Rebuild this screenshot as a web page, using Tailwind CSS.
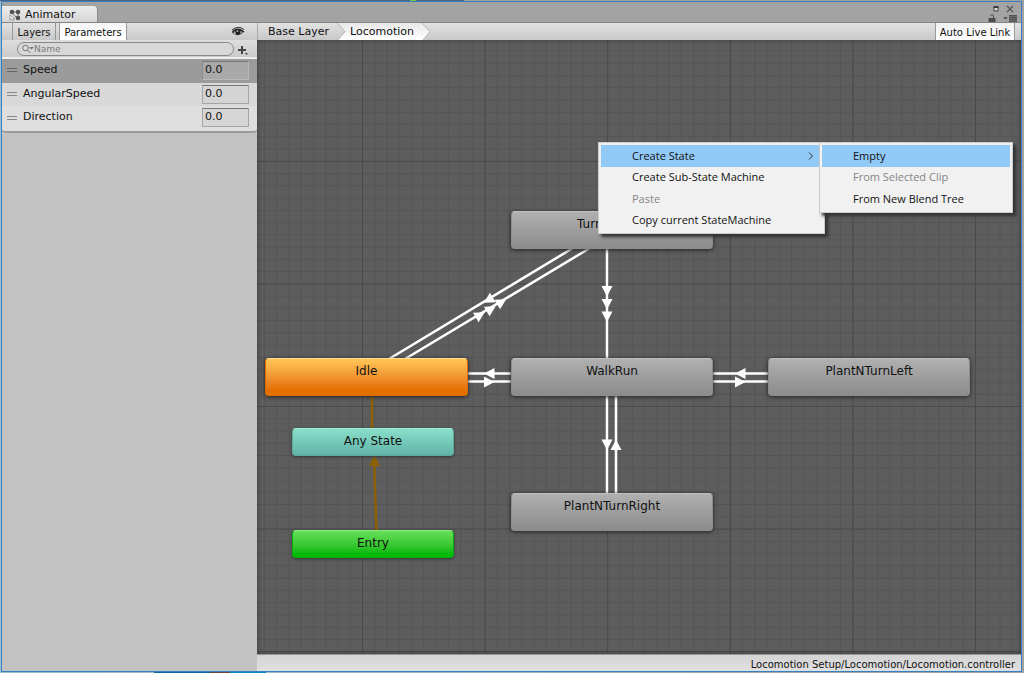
<!DOCTYPE html>
<html lang="en">
<head>
<meta charset="utf-8">
<title>Animator</title>
<script src="https://cdn.jsdelivr.net/npm/@tailwindcss/browser@4"></script>
</head>
<body class="flex h-screen flex-col overflow-hidden bg-linear-to-r from-[#9cc0d0] to-[#a2a2a2] font-['DejaVu_Sans',sans-serif] text-[11px] text-[#111]">
<div class="flex h-px shrink-0 bg-[#a0a0a0]"><div class="w-[40%] bg-[#4c6383]"></div><div class="w-1.5 bg-[#77cc33]"></div><div class="w-12 bg-[#4c6383]"></div></div>
<div class="mr-0.5 ml-px flex min-h-0 flex-1 flex-col border border-[#3380c4] bg-[#a3a3a3]">

  <header class="flex h-[21px] shrink-0 items-end justify-between border-b border-[#858585]">
    <h1 class="flex h-4 w-24 items-center gap-1 rounded-tr-sm border-r border-[#8a8a8a] bg-linear-to-b from-[#ececec] to-[#d6d6d6] pt-0.5 pl-[7px]">
      <svg class="size-3" viewBox="0 0 12 12" fill="#505050" aria-hidden="true">
        <path d="M5 3h3M9 4v4M4 5l4 4" stroke="#777" fill="none"/>
        <circle cx="3" cy="3" r="2.300"/><circle cx="9" cy="3" r="2.300"/><circle cx="9" cy="9" r="2.300"/>
        <path d="M1 6v5.500l1.600-1.400 1.200 1.700 1.200-.8-1-1.600h1.700z" fill="#eee" stroke="#777" stroke-width=".6"/>
      </svg>
      <span>Animator</span>
    </h1>
    <div class="mr-1 grid h-5 w-7 grid-cols-2 items-center justify-items-center pt-0.5">
      <button aria-label="Maximize" class="h-2"><svg class="size-2" viewBox="0 0 8 8"><path d="M2 2h4v4H2z" fill="#ddd" stroke="#3c3c3c" stroke-width="1"/><path d="M1.500 2h5" stroke="#3c3c3c" stroke-width="2"/></svg></button>
      <button aria-label="Close" class="h-2"><svg class="size-2" viewBox="0 0 8 8"><path d="M1 .8l6 6.400M7 .8L1 7.200" stroke="#4d4d4d" stroke-width="1.200"/></svg></button>
      <button aria-label="Lock" class="-ml-2 h-2"><svg class="h-2 w-2" viewBox="0 0 8 8"><path d="M.5 4h7v4h-7z" fill="#4d4d4d"/><path d="M2.500 2V1.500Q4 0 5.500 1.200V4" fill="none" stroke="#4d4d4d"/></svg></button>
      <button aria-label="Window menu" class="h-2"><svg class="h-2 w-3.5" viewBox="0 0 14 8"><path d="M0 3h5L2.500 5.500zM6 1h8v7H6z" fill="#555"/><path d="M6 2.500h8M6 4.500h8M6 6.500h8" stroke="#777" stroke-width=".6"/></svg></button>
    </div>
  </header>

  <div class="flex min-h-0 flex-1">
    <aside class="flex w-[255px] shrink-0 flex-col bg-[#c2c2c2]">
      <div class="flex h-[17px] items-stretch bg-linear-to-b from-[#e2e2e2] to-[#c8c8c8] pl-2.5 text-[10px] leading-4">
        <button class="w-11 border-x border-[#999] pt-0.5">Layers</button>
        <button class="ml-[3px] w-[68px] border-x border-[#999] bg-linear-to-b from-[#f6f6f6] to-white pt-0.5">Parameters</button>
        <button aria-label="Toggle panel" class="mr-3 ml-auto"><svg class="h-3 w-3.5" viewBox="0 0 14 12"><path d="M.5 6Q6.500-.5 13.500 5.500Q7 12.500.5 6z" fill="#222"/><path d="M1 4Q7-1 13 3.500" fill="none" stroke="#333"/><path d="M2.500 6.500Q3.500 5 4.300 5Q4 7 5.200 8.300Q3.500 8 2.500 6.500zM9.500 5Q11 5.500 11.500 6.300Q10.500 7.500 9 8Q10 7 9.500 5z" fill="#ccc"/><circle cx="6.500" cy="5" r="1" fill="#aaa"/></svg></button>
      </div>
      <div class="flex h-[17px] items-center gap-[3px] bg-linear-to-b from-[#dedede] to-[#cacaca] pl-[15px]">
        <label class="flex h-3.5 w-[217px] items-center rounded-full border border-[#898989] bg-[#d8d8d8] pl-1">
          <svg class="h-2.5 w-3" viewBox="0 0 12 10" fill="none" stroke="#777" aria-hidden="true"><circle cx="3.500" cy="4" r="2.800"/><path d="M5.500 6l3 3"/><path d="M7 3h5L9.500 5.500z" fill="#777" stroke="none"/></svg>
          <input aria-label="Search parameters" placeholder="Name" class="min-w-0 flex-1 bg-transparent text-[9px] leading-3 outline-none placeholder:text-[#7c7c7c]">
        </label>
        <button aria-label="Add parameter"><svg class="size-3" viewBox="0 0 12 12"><path d="M1 7h8M5 3v8" stroke="#444" stroke-width="2"/><path d="M8 10h3l-1.500 2z" fill="#444"/></svg></button>
      </div>
      <ul class="overflow-hidden rounded-b border-t-2 border-b-2 border-t-[#eee] border-b-[#9b9b9b] bg-[#dedede]">
        <li class="flex h-6 items-center bg-[#9b9b9b] pr-2 pb-0.5 pl-[5px]">
          <svg class="mr-1.5 h-1 w-2.5" viewBox="0 0 10 4" aria-hidden="true"><path d="M0 .5h10M0 3.500h10" stroke="#666"/></svg>
          <label for="speed" class="flex-1">Speed</label>
          <input id="speed" value="0.0" class="h-[19px] w-[47px] border border-[#b8b8b8] border-t-[#777] border-l-[#8a8a8a] bg-[#a9a9a9] px-0.5 pb-0.5 outline-none">
        </li>
        <li class="flex h-[23px] items-center bg-[#d8d8d8] pr-2 pb-px pl-[5px]">
          <svg class="mr-1.5 h-1 w-2.5" viewBox="0 0 10 4" aria-hidden="true"><path d="M0 .5h10M0 3.500h10" stroke="#888"/></svg>
          <label for="angular" class="flex-1">AngularSpeed</label>
          <input id="angular" value="0.0" class="h-[19px] w-[47px] border border-[#a5a5a5] border-t-[#777] bg-[#d4d4d4] px-0.5 pb-0.5 outline-none">
        </li>
        <li class="flex h-[25px] items-center pr-2 pb-0.5 pl-[5px]">
          <svg class="mr-1.5 h-1 w-2.5" viewBox="0 0 10 4" aria-hidden="true"><path d="M0 .5h10M0 3.500h10" stroke="#888"/></svg>
          <label for="direction" class="flex-1">Direction</label>
          <input id="direction" value="0.0" class="h-[19px] w-[47px] border border-[#a5a5a5] border-t-[#777] bg-[#d6d6d6] px-0.5 pb-0.5 outline-none">
        </li>
      </ul>
    </aside>

    <main class="flex min-w-0 flex-1 flex-col">
      <div class="flex h-[17px] shrink-0 bg-linear-to-b from-[#e2e2e2] to-[#c8c8c8] leading-4">
        <nav aria-label="Breadcrumb" class="relative flex border-l border-[#aaa] pt-px">
          <svg class="absolute inset-0 h-full w-[172px]" viewBox="0 0 172 17" aria-hidden="true">
            <defs><linearGradient id="crumb" x2="0" y2="1"><stop stop-color="#e8e8e8"/><stop offset="1" stop-color="#fff"/></linearGradient></defs>
            <path d="M80 0h84l8 8.500-7 8.500H80l7-8.500z" fill="url(#crumb)"/>
            <path d="M79 0l8 8.500-7 8.500M164 0l8 8.500-7 8.500" fill="none" stroke="#b5b5b5"/>
          </svg>
          <a href="#base" class="relative w-[83px] pl-2.5">Base Layer</a>
          <a href="#locomotion" class="relative w-[89px] pl-[9px]">Locomotion</a>
        </nav>
        <button class="mr-1.5 ml-auto w-20 border-x border-[#999] bg-linear-to-b from-[#f0f0f0] to-white pt-0.5 text-[10px]">Auto Live Link</button>
      </div>

      <section aria-label="State machine" class="relative min-h-0 flex-1 overflow-hidden bg-[#5d5d5d]">
        <svg class="absolute inset-0 size-full" aria-hidden="true">
          <defs>
            <pattern id="minor" width="10" height="10" patternUnits="userSpaceOnUse" patternTransform="translate(105 366) scale(1.226)"><path d="M.4 0v10M0 .4h10" stroke="#555" stroke-width=".9"/></pattern>
            <pattern id="major" width="100" height="100" patternUnits="userSpaceOnUse" patternTransform="translate(105 366) scale(1.226)"><path d="M.4 0v100M0 .4h100" stroke="#494949" stroke-width=".8"/></pattern>
            <path id="tip" d="M-5-5.500L5.500 0L-5 5.500z"/>
          </defs>
          <rect width="100%" height="100%" fill="url(#minor)"/>
          <rect width="100%" height="100%" fill="url(#major)"/>
          <g stroke="#fff" stroke-width="2.500">
            <path d="M132 319L316 208M148 319L333 208M350 208V320M350 354V456M359 354V456M210 333.500H256M210 341.500H256M454 333.500H512M454 341.500H512"/>
          </g>
          <path d="M115 355V390M119.500 492L117 418" stroke="#8f6000" stroke-width="2.500"/>
          <g fill="#fff">
            <use href="#tip" transform="translate(231.500 260) rotate(149)"/>
            <use href="#tip" transform="translate(223 275) rotate(-31)"/>
            <use href="#tip" transform="translate(234 269) rotate(-31)"/>
            <use href="#tip" transform="translate(244.500 262) rotate(-31)"/>
            <use href="#tip" transform="translate(350 251) rotate(90)"/>
            <use href="#tip" transform="translate(350 264) rotate(90)"/>
            <use href="#tip" transform="translate(350 276.500) rotate(90)"/>
            <use href="#tip" transform="translate(350 404.500) rotate(90)"/>
            <use href="#tip" transform="translate(359 405) rotate(-90)"/>
            <use href="#tip" transform="translate(232.500 333.500) rotate(180)"/>
            <use href="#tip" transform="translate(232 342)"/>
            <use href="#tip" transform="translate(483.500 333.500) rotate(180)"/>
            <use href="#tip" transform="translate(483 342)"/>
          </g>
          <use href="#tip" transform="translate(117.500 421) rotate(-90)" fill="#8f6000"/>
        </svg>

        <div class="absolute top-[171px] left-[254px] h-[38px] w-[202px] rounded border border-[#8c8c8c] border-t-[#c0c0c0] bg-linear-to-b from-[#b0b0b0] to-[#8c8c8c] pt-1 text-center text-xs shadow-[0_1px_4px_#222]">TurnOnSpot</div>
        <div class="absolute top-[318px] left-2 h-[38px] w-[203px] rounded border border-[#d96b00] border-t-[#ffdc90] bg-linear-to-b from-[#ffc658] to-[#e47000] to-85% pt-1 text-center text-xs shadow-[0_1px_4px_#222]">Idle</div>
        <div class="absolute top-[318px] left-[254px] h-[38px] w-[202px] rounded border border-[#8c8c8c] border-t-[#c0c0c0] bg-linear-to-b from-[#b0b0b0] to-[#8c8c8c] pt-1 text-center text-xs shadow-[0_1px_4px_#222]">WalkRun</div>
        <div class="absolute top-[318px] left-[511px] h-[38px] w-[202px] rounded border border-[#8c8c8c] border-t-[#c0c0c0] bg-linear-to-b from-[#b0b0b0] to-[#8c8c8c] pt-1 text-center text-xs shadow-[0_1px_4px_#222]">PlantNTurnLeft</div>
        <div class="absolute top-[453px] left-[254px] h-[38px] w-[202px] rounded border border-[#8c8c8c] border-t-[#c0c0c0] bg-linear-to-b from-[#b0b0b0] to-[#8c8c8c] pt-1 text-center text-xs shadow-[0_1px_4px_#222]">PlantNTurnRight</div>
        <div class="absolute top-[388px] left-[35px] h-7 w-[162px] rounded border border-[#5eaa9d] border-t-[#a0e8d8] bg-linear-to-b from-[#8adfcb] to-[#60b3a6] pt-1 text-center text-xs shadow-[0_1px_3px_#333]">Any State</div>
        <div class="absolute top-[490px] left-[35px] h-7 w-[162px] rounded border border-[#05ac0b] border-t-[#8cec80] bg-linear-to-b from-[#64df58] to-[#04bb0a] to-85% pt-1 text-center text-xs shadow-[0_1px_3px_#333]">Entry</div>
        <div class="pointer-events-none absolute inset-0 shadow-[inset_0_0_5px_#3a3a3a]"></div>

        <div role="menu" aria-label="Create" class="absolute top-[102px] left-[341px] flex w-[227px] flex-col border border-[#ccc] bg-[#f1f1f1] p-0.5 font-['Open_Sans','Noto_Sans',sans-serif] text-[11px] shadow-[3px_3px_3px_#333]">
          <button role="menuitem" aria-haspopup="true" class="flex h-[22px] items-center justify-between bg-[#91c9f7] pr-2 pl-[31px]">Create State
            <svg class="h-2 w-1.5" viewBox="0 0 6 8" fill="none" stroke="#333" aria-hidden="true"><path d="M1 .5L4.500 4L1 7.500"/></svg>
          </button>
          <button role="menuitem" class="h-[21px] pl-[31px] text-left">Create Sub-State Machine</button>
          <button role="menuitem" disabled class="h-[22px] pl-[31px] text-left text-[#858585]">Paste</button>
          <button role="menuitem" class="h-[21px] pl-[31px] text-left">Copy current StateMachine</button>
        </div>
        <div role="menu" aria-label="Create State" class="absolute top-[102px] left-[562px] flex w-[194px] flex-col border border-[#ccc] bg-[#f1f1f1] p-0.5 font-['Open_Sans','Noto_Sans',sans-serif] text-[11px] shadow-[3px_3px_3px_#333]">
          <button role="menuitem" class="h-[22px] bg-[#91c9f7] pl-[31px] text-left">Empty</button>
          <button role="menuitem" disabled class="h-[21px] pl-[31px] text-left text-[#858585]">From Selected Clip</button>
          <button role="menuitem" class="h-[22px] pl-[31px] text-left">From New Blend Tree</button>
        </div>
      </section>

      <footer class="h-[17px] shrink-0 border-t border-[#999] bg-linear-to-b from-[#d4d4d4] to-[#e0e0e0] pt-0.5 pr-1.5 text-right text-[10px] leading-4">Locomotion Setup/Locomotion/Locomotion.controller</footer>
    </main>
  </div>
</div>
<div class="flex h-px shrink-0"><div class="w-[15%]"></div><div class="w-14 bg-[#0b65a0]"></div><div class="w-5 bg-[#6c4538]"></div><div class="w-9 bg-[#0887c4]"></div></div>
</body>
</html>
